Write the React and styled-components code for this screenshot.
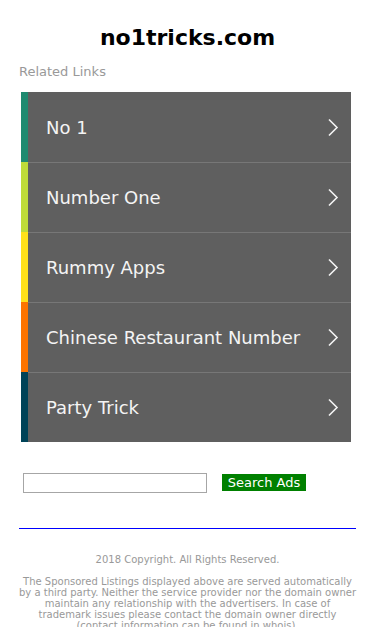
import React from "react";
import styled, { createGlobalStyle } from "styled-components";

const Global = createGlobalStyle`
  html, body { margin: 0; padding: 0; background: #fff; }
  body { font-family: "DejaVu Sans", sans-serif; }
`;

const Page = styled.div`
  padding: 25px 19px 0;
`;

const Title = styled.h1`
  margin: 0;
  font-size: 22px;
  line-height: 26px;
  font-weight: bold;
  text-align: center;
  color: #000;
`;

const Subtitle = styled.div`
  margin-top: 13px;
  font-size: 13px;
  line-height: 16px;
  color: #999;
`;

const List = styled.ul`
  list-style: none;
  margin: 12px 0 0 2px;
  padding: 0;
  width: 330px;
`;

const Row = styled.li`
  display: flex;
  height: 70px;
`;

const Bar = styled.div`
  width: 7px;
  flex: none;
  background: ${(p) => p.$color};
`;

const Content = styled.a`
  flex: 1;
  display: flex;
  align-items: center;
  justify-content: space-between;
  background: #5f5f5f;
  border-top: ${(p) => (p.$first ? "none" : "1px solid #777")};
  padding: 0 12px 0 18px;
  color: #f4f4f4;
  font-size: 18px;
  text-decoration: none;
`;

const SearchRow = styled.form`
  display: flex;
  align-items: flex-start;
  gap: 15px;
  margin: 31px 0 0 4px;
`;

const Input = styled.input`
  box-sizing: border-box;
  width: 184px;
  height: 20px;
  border: 1px solid #a6a6a6;
  margin: 0;
  padding: 0;
`;

const Button = styled.button`
  height: 17px;
  width: 84px;
  border: none;
  padding: 0;
  margin: 1px 0 0;
  background: #008000;
  color: #fff;
  font-family: "DejaVu Sans", sans-serif;
  font-size: 13px;
  line-height: 16px;
`;

const Rule = styled.div`
  height: 1px;
  background: #0000ff;
  margin-top: 35px;
`;

const Footer = styled.div`
  margin: 24px -2px 0;
  text-align: center;
  color: #999;
  font-size: 10px;
`;

const Copy = styled.p`
  margin: 0;
  line-height: 13px;
`;

const Notice = styled.p`
  margin: 10px 0 0;
  line-height: 11px;
`;

const Chevron = () => (
  <svg width="12" height="19" viewBox="0 0 12 19" fill="none">
    <polyline points="2,1.5 10,9.5 2,17.5" stroke="#f4f4f4" strokeWidth="1.6" />
  </svg>
);

const links = [
  { label: "No 1", color: "#1f8a70" },
  { label: "Number One", color: "#bedb39" },
  { label: "Rummy Apps", color: "#ffe11a" },
  { label: "Chinese Restaurant Number", color: "#fd7400" },
  { label: "Party Trick", color: "#004358" },
];

export default function App() {
  return (
    <>
      <Global />
      <Page>
        <Title>no1tricks.com</Title>
        <Subtitle>Related Links</Subtitle>
        <List>
          {links.map((l, i) => (
            <Row key={l.label}>
              <Bar $color={l.color} />
              <Content href="#" $first={i === 0}>
                <span>{l.label}</span>
                <Chevron />
              </Content>
            </Row>
          ))}
        </List>
        <SearchRow onSubmit={(e) => e.preventDefault()}>
          <Input type="text" />
          <Button type="submit">Search Ads</Button>
        </SearchRow>
        <Rule />
        <Footer>
          <Copy>2018 Copyright. All Rights Reserved.</Copy>
          <Notice>
            The Sponsored Listings displayed above are served automatically by a
            third party. Neither the service provider nor the domain owner
            maintain any relationship with the advertisers. In case of trademark
            issues please contact the domain owner directly (contact information
            can be found in whois).
          </Notice>
        </Footer>
      </Page>
    </>
  );
}
